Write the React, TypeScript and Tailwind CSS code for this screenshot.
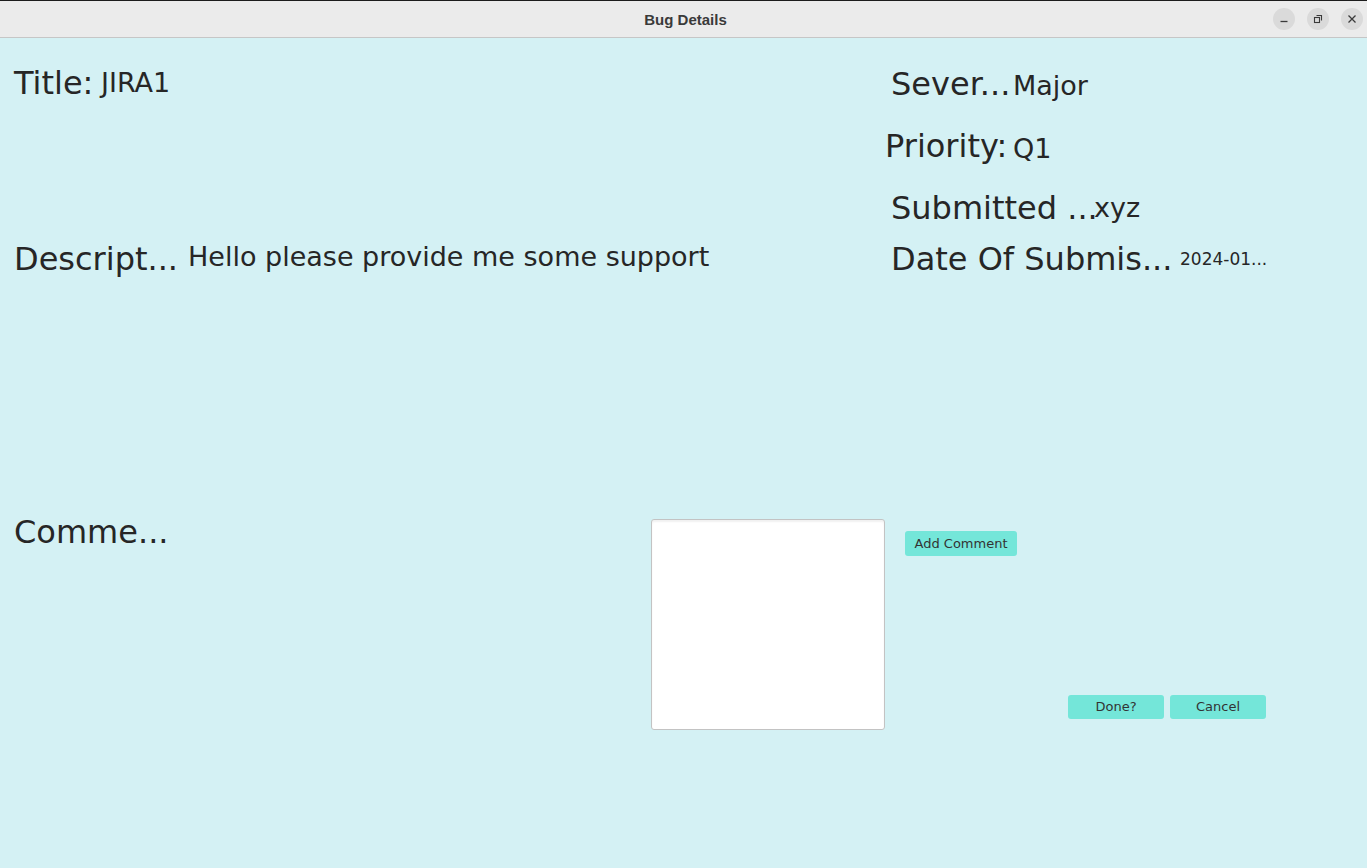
import React from 'react'

const font = "font-['DejaVu_Sans',sans-serif]"

function TitleBar() {
  return (
    <div className="relative flex h-[38px] shrink-0 items-center justify-center border-t border-b border-t-[#1c1c1c] border-b-[#c6c6c6] bg-[#ebebeb]">
      <span className="ml-[4px] mt-[2px] font-['Liberation_Sans',sans-serif] text-[15px] font-bold text-[#3a3a3a]">Bug Details</span>
      <div className="absolute right-[4px] top-[7px] flex gap-[12px]">
        <button className="flex h-[22px] w-[22px] items-center justify-center rounded-full bg-[#dadada]">
          <svg width="10" height="10" viewBox="0 0 10 10">
            <path d="M1.5 7.5h7" stroke="#3a3a3a" strokeWidth="1.3" />
          </svg>
        </button>
        <button className="flex h-[22px] w-[22px] items-center justify-center rounded-full bg-[#dadada]">
          <svg width="10" height="10" viewBox="0 0 10 10" fill="none">
            <path d="M3.5 1.5h5v5" stroke="#3a3a3a" strokeWidth="1.1" />
            <rect x="1.5" y="3.5" width="5" height="5" stroke="#3a3a3a" strokeWidth="1.1" />
          </svg>
        </button>
        <button className="flex h-[22px] w-[22px] items-center justify-center rounded-full bg-[#dadada]">
          <svg width="10" height="10" viewBox="0 0 10 10">
            <path d="M1.5 1.5l7 7M8.5 1.5l-7 7" stroke="#3a3a3a" strokeWidth="1.3" />
          </svg>
        </button>
      </div>
    </div>
  )
}

const label = 'shrink-0 whitespace-nowrap text-[32px] leading-[37px]'
const value = 'whitespace-nowrap text-[27px] leading-[31px]'
const btn = 'flex items-center justify-center rounded-[3px] bg-[#74e6d9] text-[13px] text-[#333333]'

export default function App() {
  return (
    <div className={`flex h-screen flex-col overflow-hidden ${font}`}>
      <TitleBar />
      <div className="flex-1 bg-[#d4f1f4] text-[#262626]">
        <div className="flex items-start">
          <div className="w-[885px] shrink-0 pl-[14px]">
            <div className="mt-[27px] flex items-start">
              <div className={`${label} w-[87px]`}>Title:</div>
              <div className={`${value} mt-[2px]`}>JIRA1</div>
            </div>
            <div className="mt-[139px] flex items-start">
              <div className={`${label} w-[174px]`}>Descript...</div>
              <div className={value}>Hello please provide me some support</div>
            </div>
          </div>

          <div className="mt-[28px] flex flex-col">
            <div className="flex h-[62px] items-start pl-[6px]">
              <div className={`${label} w-[122px]`}>Sever...</div>
              <div className={`${value} mt-[4px]`}>Major</div>
            </div>
            <div className="flex h-[62px] items-start">
              <div className={`${label} w-[128px]`}>Priority:</div>
              <div className={`${value} mt-[5px]`}>Q1</div>
            </div>
            <div className="flex h-[51px] items-start pl-[6px]">
              <div className={`${label} w-[203px]`}>Submitted ...</div>
              <div className={`${value} mt-[2px]`}>xyz</div>
            </div>
            <div className="flex h-[37px] items-start pl-[6px]">
              <div className={`${label} w-[289px]`}>Date Of Submis...</div>
              <div className="mt-[8px] whitespace-nowrap text-[17px] leading-[20px]">2024-01...</div>
            </div>
          </div>
        </div>

        <div className="mt-[236px] flex items-start pl-[14px]">
          <div className={`${label} w-[637px]`}>Comme...</div>
          <textarea className="mt-[5px] h-[211px] w-[234px] shrink-0 resize-none rounded-[3px] border border-[#c3c3c3] bg-white shadow-[inset_0_2px_2px_rgba(0,0,0,0.06)] outline-none" />
          <div className="ml-[20px] flex flex-col">
            <button className={`${btn} mt-[17px] h-[25px] w-[112px]`}>Add Comment</button>
            <div className="ml-[163px] mt-[139px] flex gap-[6px]">
              <button className={`${btn} h-[24px] w-[96px]`}>Done?</button>
              <button className={`${btn} h-[24px] w-[96px]`}>Cancel</button>
            </div>
          </div>
        </div>
      </div>
    </div>
  )
}
